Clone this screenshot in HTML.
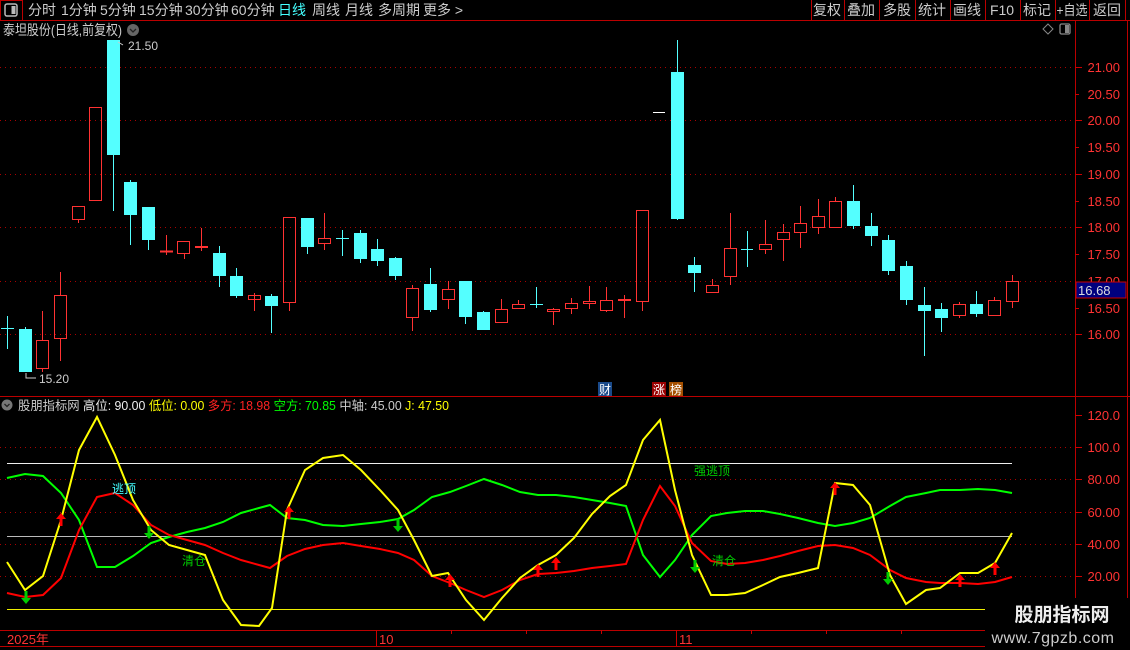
<!DOCTYPE html>
<html><head><meta charset="utf-8"><style>
html,body{margin:0;padding:0;background:#000;width:1130px;height:650px;overflow:hidden}
svg{display:block}
text{font-family:"Liberation Sans","Noto Sans CJK SC",sans-serif}
</style></head><body>
<svg width="1130" height="650" xmlns="http://www.w3.org/2000/svg">
<rect width="1130" height="650" fill="#000"/>
<!-- top bar -->
<line x1="0" y1="20.5" x2="1130" y2="20.5" stroke="#b00" />
<rect x="0.5" y="0.5" width="22" height="20" fill="none" stroke="#b00"/>
<rect x="5" y="4" width="12" height="12" rx="2" fill="none" stroke="#bbb" stroke-width="1.5"/>
<rect x="11.5" y="6" width="4" height="8" fill="#bbb"/>
<g font-size="14" fill="#ccc">
<text x="28" y="15">分时</text><text x="61" y="15">1分钟</text><text x="100" y="15">5分钟</text><text x="139" y="15">15分钟</text><text x="185" y="15">30分钟</text><text x="231" y="15">60分钟</text>
<text x="278" y="15" fill="#4ff">日线</text><text x="312" y="15">周线</text><text x="345" y="15">月线</text><text x="378" y="15">多周期</text><text x="423" y="15">更多 &gt;</text>
</g>
<g stroke="#b00"><line x1="811.5" y1="0" x2="811.5" y2="20"/><line x1="844.5" y1="0" x2="844.5" y2="20"/><line x1="879.5" y1="0" x2="879.5" y2="20"/><line x1="915.5" y1="0" x2="915.5" y2="20"/><line x1="950.5" y1="0" x2="950.5" y2="20"/><line x1="985.5" y1="0" x2="985.5" y2="20"/><line x1="1020.5" y1="0" x2="1020.5" y2="20"/><line x1="1055.5" y1="0" x2="1055.5" y2="20"/><line x1="1089.5" y1="0" x2="1089.5" y2="20"/><line x1="1125.5" y1="0" x2="1125.5" y2="20"/></g>
<g font-size="14" fill="#ccc" text-anchor="middle">
<text x="827" y="15">复权</text><text x="861" y="15">叠加</text><text x="897" y="15">多股</text><text x="932" y="15">统计</text><text x="967" y="15">画线</text><text x="1002" y="15">F10</text><text x="1037" y="15">标记</text><text x="1072" y="15" textLength="31" lengthAdjust="spacingAndGlyphs">+自选</text><text x="1107" y="15">返回</text>
</g>
<!-- title -->
<text x="3" y="35" font-size="14" fill="#ccc" textLength="119" lengthAdjust="spacingAndGlyphs">泰坦股份(日线,前复权)</text>
<circle cx="133" cy="30" r="6" fill="#666"/><path d="M130 29l3 3 3-3" stroke="#222" stroke-width="1.3" fill="none"/>
<path d="M1048 24l5 5-5 5-5-5z" fill="none" stroke="#888"/>
<rect x="1060" y="24" width="10" height="10" rx="1.5" fill="none" stroke="#888" stroke-width="1.3"/><rect x="1065" y="25" width="4" height="8" fill="#888"/>
<!-- axes -->
<line x1="1075.5" y1="21" x2="1075.5" y2="650" stroke="#b00"/>
<line x1="1127.5" y1="21" x2="1127.5" y2="650" stroke="#b00"/>
<line x1="0" y1="396.5" x2="1130" y2="396.5" stroke="#b00"/>
<line x1="0" y1="630.5" x2="1075" y2="630.5" stroke="#b00"/>
<line x1="0" y1="646.5" x2="1075" y2="646.5" stroke="#b00"/>
<g stroke="#a00" stroke-dasharray="1,4">
<line x1="0" y1="67.5" x2="1075" y2="67.5"/><line x1="0" y1="120.5" x2="1075" y2="120.5"/><line x1="0" y1="174.5" x2="1075" y2="174.5"/><line x1="0" y1="227.5" x2="1075" y2="227.5"/><line x1="0" y1="281.5" x2="1075" y2="281.5"/><line x1="0" y1="334.5" x2="1075" y2="334.5"/>
<line x1="0" y1="447.5" x2="1075" y2="447.5"/><line x1="0" y1="479.5" x2="1075" y2="479.5"/><line x1="0" y1="512.5" x2="1075" y2="512.5"/><line x1="0" y1="544.5" x2="1075" y2="544.5"/><line x1="0" y1="576.5" x2="1075" y2="576.5"/>
</g>
<g font-size="13" fill="#f33" text-anchor="end">
<text x="1120" y="72">21.00</text><text x="1120" y="99">20.50</text><text x="1120" y="125">20.00</text><text x="1120" y="152">19.50</text><text x="1120" y="179">19.00</text><text x="1120" y="206">18.50</text><text x="1120" y="232">18.00</text><text x="1120" y="259">17.50</text><text x="1120" y="286">17.00</text><text x="1120" y="313">16.50</text><text x="1120" y="339">16.00</text>
</g>
<g stroke="#c00"><line x1="1075" y1="67.5" x2="1082" y2="67.5"/><line x1="1075" y1="94.5" x2="1079" y2="94.5"/><line x1="1075" y1="120.5" x2="1082" y2="120.5"/><line x1="1075" y1="147.5" x2="1079" y2="147.5"/><line x1="1075" y1="174.5" x2="1082" y2="174.5"/><line x1="1075" y1="201.5" x2="1079" y2="201.5"/><line x1="1075" y1="227.5" x2="1082" y2="227.5"/><line x1="1075" y1="254.5" x2="1079" y2="254.5"/><line x1="1075" y1="308.5" x2="1079" y2="308.5"/><line x1="1075" y1="334.5" x2="1082" y2="334.5"/>
<line x1="1075" y1="415.5" x2="1082" y2="415.5"/><line x1="1075" y1="447.5" x2="1082" y2="447.5"/><line x1="1075" y1="479.5" x2="1082" y2="479.5"/><line x1="1075" y1="512.5" x2="1082" y2="512.5"/><line x1="1075" y1="544.5" x2="1082" y2="544.5"/><line x1="1075" y1="576.5" x2="1082" y2="576.5"/></g>
<rect x="1076" y="282" width="50" height="16" fill="#00007f" stroke="#c00"/>
<text x="1078" y="295" font-size="13" fill="#ddd">16.68</text>
<g font-size="13" fill="#f33" text-anchor="end">
<text x="1120" y="420">120.0</text><text x="1120" y="452">100.0</text><text x="1120" y="484">80.00</text><text x="1120" y="517">60.00</text><text x="1120" y="549">40.00</text><text x="1120" y="581">20.00</text>
</g>
<!-- candles -->
<g stroke-width="1">
<g stroke="#54ffff" fill="#54ffff">
<line x1="7.5" y1="316" x2="7.5" y2="349"/><line x1="1" y1="328.5" x2="14" y2="328.5"/>
<line x1="25.5" y1="327" x2="25.5" y2="372"/><rect x="19" y="329" width="13" height="43" stroke="none"/>
<line x1="113.5" y1="40" x2="113.5" y2="211"/><rect x="107" y="40" width="13" height="115" stroke="none"/>
<line x1="130.5" y1="180" x2="130.5" y2="245"/><rect x="124" y="182" width="13" height="33" stroke="none"/>
<line x1="148.5" y1="207" x2="148.5" y2="250"/><rect x="142" y="207" width="13" height="33" stroke="none"/>
<line x1="219.5" y1="246" x2="219.5" y2="287"/><rect x="213" y="253" width="13" height="23" stroke="none"/>
<line x1="236.5" y1="268" x2="236.5" y2="298"/><rect x="230" y="276" width="13" height="20" stroke="none"/>
<line x1="271.5" y1="294" x2="271.5" y2="333"/><rect x="265" y="296" width="13" height="10" stroke="none"/>
<line x1="307.5" y1="218" x2="307.5" y2="254"/><rect x="301" y="218" width="13" height="29" stroke="none"/>
<line x1="342.5" y1="230" x2="342.5" y2="256"/><line x1="336" y1="238.5" x2="349" y2="238.5"/>
<line x1="360.5" y1="230" x2="360.5" y2="263"/><rect x="354" y="233" width="13" height="26" stroke="none"/>
<line x1="377.5" y1="239" x2="377.5" y2="266"/><rect x="371" y="249" width="13" height="12" stroke="none"/>
<line x1="395.5" y1="257" x2="395.5" y2="280"/><rect x="389" y="258" width="13" height="18" stroke="none"/>
<line x1="430.5" y1="268" x2="430.5" y2="312"/><rect x="424" y="284" width="13" height="26" stroke="none"/>
<line x1="465.5" y1="281" x2="465.5" y2="324"/><rect x="459" y="281" width="13" height="36" stroke="none"/>
<line x1="483.5" y1="311" x2="483.5" y2="330"/><rect x="477" y="312" width="13" height="18" stroke="none"/>
<line x1="536.5" y1="287" x2="536.5" y2="308"/><line x1="530" y1="304.5" x2="543" y2="304.5"/>
<line x1="677.5" y1="40" x2="677.5" y2="220"/><rect x="671" y="72" width="13" height="147" stroke="none"/>
<line x1="694.5" y1="257" x2="694.5" y2="292"/><rect x="688" y="265" width="13" height="8" stroke="none"/>
<line x1="747.5" y1="231" x2="747.5" y2="267"/><line x1="741" y1="249.5" x2="753" y2="249.5"/>
<line x1="853.5" y1="185" x2="853.5" y2="229"/><rect x="847" y="201" width="13" height="25" stroke="none"/>
<line x1="871.5" y1="213" x2="871.5" y2="246"/><rect x="865" y="226" width="13" height="10" stroke="none"/>
<line x1="888.5" y1="235" x2="888.5" y2="275"/><rect x="882" y="240" width="13" height="31" stroke="none"/>
<line x1="906.5" y1="261" x2="906.5" y2="305"/><rect x="900" y="266" width="13" height="34" stroke="none"/>
<line x1="924.5" y1="287" x2="924.5" y2="356"/><rect x="918" y="305" width="13" height="6" stroke="none"/>
<line x1="941.5" y1="303" x2="941.5" y2="332"/><rect x="935" y="309" width="13" height="9" stroke="none"/>
<line x1="976.5" y1="291" x2="976.5" y2="317"/><rect x="970" y="304" width="13" height="10" stroke="none"/>
</g>
<g stroke="#ff3232" fill="none">
<line x1="42.5" y1="311" x2="42.5" y2="340"/><line x1="42.5" y1="369" x2="42.5" y2="372"/><rect x="36.5" y="340.5" width="12" height="28"/>
<line x1="60.5" y1="272" x2="60.5" y2="295"/><line x1="60.5" y1="339" x2="60.5" y2="361"/><rect x="54.5" y="295.5" width="12" height="43"/>
<line x1="78.5" y1="220" x2="78.5" y2="223"/><rect x="72.5" y="206.5" width="12" height="13"/>
<rect x="89.5" y="107.5" width="12" height="93"/>
<line x1="166.5" y1="235" x2="166.5" y2="255"/><line x1="160" y1="251.5" x2="173" y2="251.5" stroke-width="2"/>
<line x1="184.5" y1="254" x2="184.5" y2="259"/><rect x="177.5" y="241.5" width="12" height="12"/>
<line x1="201.5" y1="228" x2="201.5" y2="251"/><line x1="195" y1="247" x2="208" y2="247" stroke-width="2"/>
<line x1="254.5" y1="293" x2="254.5" y2="311"/><rect x="248.5" y="295.5" width="12" height="4"/>
<line x1="289.5" y1="303" x2="289.5" y2="311"/><rect x="283.5" y="217.5" width="12" height="85"/>
<line x1="324.5" y1="213" x2="324.5" y2="250"/><rect x="318.5" y="238.5" width="12" height="5" fill="#000"/>
<line x1="412.5" y1="285" x2="412.5" y2="288"/><line x1="412.5" y1="318" x2="412.5" y2="331"/><rect x="406.5" y="288.5" width="12" height="29"/>
<line x1="448.5" y1="281" x2="448.5" y2="309"/><rect x="442.5" y="289.5" width="12" height="10" fill="#000"/>
<line x1="501.5" y1="299" x2="501.5" y2="323"/><rect x="495.5" y="309.5" width="12" height="13" fill="#000"/>
<line x1="518.5" y1="300" x2="518.5" y2="304"/><rect x="512.5" y="304.5" width="12" height="4"/>
<line x1="553.5" y1="308" x2="553.5" y2="325"/><rect x="547.5" y="309.5" width="12" height="2" fill="#000"/>
<line x1="571.5" y1="298" x2="571.5" y2="314"/><rect x="565.5" y="303.5" width="12" height="5" fill="#000"/>
<line x1="589.5" y1="286" x2="589.5" y2="309"/><rect x="583.5" y="301.5" width="12" height="2" fill="#000"/>
<line x1="606.5" y1="287" x2="606.5" y2="312"/><rect x="600.5" y="300.5" width="12" height="10" fill="#000"/>
<line x1="624.5" y1="295" x2="624.5" y2="318"/><line x1="618" y1="300" x2="631" y2="300" stroke-width="2"/>
<line x1="642.5" y1="302" x2="642.5" y2="311"/><rect x="636.5" y="210.5" width="12" height="91"/>
<line x1="712.5" y1="279" x2="712.5" y2="285"/><rect x="706.5" y="285.5" width="12" height="7"/>
<line x1="730.5" y1="213" x2="730.5" y2="285"/><rect x="724.5" y="248.5" width="12" height="28" fill="#000"/>
<line x1="765.5" y1="220" x2="765.5" y2="254"/><rect x="759.5" y="244.5" width="12" height="5" fill="#000"/>
<line x1="783.5" y1="224" x2="783.5" y2="261"/><rect x="777.5" y="232.5" width="12" height="7" fill="#000"/>
<line x1="800.5" y1="206" x2="800.5" y2="248"/><rect x="794.5" y="223.5" width="12" height="9" fill="#000"/>
<line x1="818.5" y1="199" x2="818.5" y2="234"/><rect x="812.5" y="216.5" width="12" height="11" fill="#000"/>
<line x1="835.5" y1="197" x2="835.5" y2="201"/><rect x="829.5" y="201.5" width="12" height="26"/>
<line x1="959.5" y1="302" x2="959.5" y2="318"/><rect x="953.5" y="304.5" width="12" height="11" fill="#000"/>
<line x1="994.5" y1="297" x2="994.5" y2="300"/><rect x="988.5" y="300.5" width="12" height="15"/>
<line x1="1012.5" y1="275" x2="1012.5" y2="308"/><rect x="1006.5" y="281.5" width="12" height="20" fill="#000"/>
</g>
</g>
<line x1="653" y1="112.5" x2="665" y2="112.5" stroke="#fff"/>
<text x="128" y="50" font-size="12" fill="#ccc">21.50</text><path d="M118 42l5 3" stroke="#ccc"/>
<text x="39" y="383" font-size="12" fill="#ccc">15.20</text><path d="M26 373v5h10" stroke="#ccc" fill="none"/>
<rect x="598" y="382" width="14" height="14" fill="#1a4a8a"/><text x="599" y="394" font-size="12" fill="#fff">财</text>
<rect x="652" y="382" width="14" height="14" fill="#900"/><text x="653" y="394" font-size="12" fill="#fff">涨</text>
<rect x="669" y="382" width="14" height="14" fill="#a55000"/><text x="670" y="394" font-size="12" fill="#fff">榜</text>
<!-- indicator header -->
<circle cx="7" cy="405" r="5.5" fill="#777"/><path d="M4.5 404l2.5 2.5 2.5-2.5" stroke="#222" stroke-width="1.3" fill="none"/>
<text x="18" y="410" font-size="12.5" fill="#ccc" textLength="431" lengthAdjust="spacingAndGlyphs">股朋指标网 <tspan fill="#eee">高位: 90.00</tspan> <tspan fill="#ff0">低位: 0.00</tspan> <tspan fill="#f22">多方: 18.98</tspan> <tspan fill="#0f0">空方: 70.85</tspan> <tspan fill="#ccc">中轴: 45.00</tspan> <tspan fill="#ff0">J: 47.50</tspan></text>
<!-- horizontal lines -->
<line x1="7" y1="463.5" x2="1012" y2="463.5" stroke="#eee"/>
<line x1="7" y1="536.5" x2="1012" y2="536.5" stroke="#bbb"/>
<line x1="7" y1="609.5" x2="985" y2="609.5" stroke="#ee0"/>
<!-- curves -->
<polyline fill="none" stroke="#0f0" stroke-width="2" points="7,478 25,474 43,476 61,493 79,520 97,567 115,567 133,556 151,543 169,537 187,532 205,528 223,522 241,513 259,508 270,505 287,518 305,520 323,525 343,526 361,524 380,522 398,519 414,510 432,497 450,492 466,486 484,479 502,485 520,492 538,495 556,495 574,497 592,500 610,503 626,506 643,555 660,577 675,560 692,535 711,516 727,513 745,511 763,511 780,514 798,518 818,523 835,526 853,523 870,518 890,506 906,497 926,493 940,490 960,490 978,489 995,490 1012,493"/>
<polyline fill="none" stroke="#f00" stroke-width="2" points="7,593 25,597 43,595 61,578 79,530 97,497 115,493 133,505 151,525 169,535 187,540 205,545 223,553 241,560 259,565 270,568 287,556 305,549 323,545 343,543 361,546 380,549 398,553 414,560 432,576 450,583 466,590 484,597 502,590 520,580 538,574 556,573 574,571 592,568 610,566 626,564 643,520 660,486 675,506 692,543 711,561 727,564 745,563 763,560 780,556 798,551 818,546 835,545 853,548 870,555 890,570 906,578 926,582 940,583 960,583 978,584 995,582 1012,577"/>
<polyline fill="none" stroke="#ff0" stroke-width="2" points="7,562 25,590 43,576 61,520 79,450 97,417 115,455 133,500 151,530 169,545 187,550 205,555 223,600 241,625 259,626 272,608 287,510 305,470 323,458 343,455 361,470 380,490 398,510 414,540 432,576 448,573 466,600 484,620 502,598 520,578 538,565 556,555 574,538 592,514 610,496 626,485 643,440 660,420 675,490 692,555 711,595 727,595 745,593 763,585 780,577 798,573 818,568 835,483 853,485 870,505 890,575 906,604 926,590 940,588 960,573 978,573 995,563 1012,533"/>
<!-- arrows -->
<g fill="#f00">
<path d="M61 513l-5 6h3.5v7h3v-7h3.5z"/><path d="M289 506l-5 6h3.5v7h3v-7h3.5z"/><path d="M450 574l-5 6h3.5v7h3v-7h3.5z"/><path d="M538 564l-5 6h3.5v7h3v-7h3.5z"/><path d="M556 557l-5 6h3.5v7h3v-7h3.5z"/><path d="M835 482l-5 6h3.5v7h3v-7h3.5z"/><path d="M960 574l-5 6h3.5v7h3v-7h3.5z"/><path d="M995 562l-5 6h3.5v7h3v-7h3.5z"/>
</g>
<g fill="#0c0">
<path d="M26 604l-5-6h3.5v-7h3v7h3.5z"/><path d="M149 539l-5-6h3.5v-7h3v7h3.5z"/><path d="M398 532l-5-6h3.5v-7h3v7h3.5z"/><path d="M695 573l-5-6h3.5v-7h3v7h3.5z"/><path d="M888 585l-5-6h3.5v-7h3v7h3.5z"/>
</g>
<text x="112" y="493" font-size="12" fill="#4ff">逃顶</text>
<text x="182" y="565" font-size="12" fill="#0c0">清仓</text>
<text x="694" y="475" font-size="12" fill="#0c0">强逃顶</text>
<text x="712" y="565" font-size="12" fill="#0c0">清仓</text>
<!-- bottom axis -->
<g stroke="#c00"><line x1="376.5" y1="630" x2="376.5" y2="646"/><line x1="676.5" y1="630" x2="676.5" y2="646"/><line x1="451.5" y1="630" x2="451.5" y2="634"/><line x1="526.5" y1="630" x2="526.5" y2="634"/><line x1="601.5" y1="630" x2="601.5" y2="634"/><line x1="751.5" y1="630" x2="751.5" y2="634"/><line x1="826.5" y1="630" x2="826.5" y2="634"/><line x1="901.5" y1="630" x2="901.5" y2="634"/></g>
<text x="7" y="644" font-size="13" fill="#f33">2025年</text>
<text x="379" y="644" font-size="13" fill="#f33">10</text>
<text x="679" y="644" font-size="13" fill="#f33">11</text>
<!-- watermark -->
<rect x="985" y="598" width="145" height="52" fill="#000"/>
<text x="1062" y="621" font-size="19" font-weight="bold" fill="#eee" text-anchor="middle">股朋指标网</text>
<text x="1053" y="643" font-size="16" fill="#ccc" text-anchor="middle" letter-spacing="0.5">www.7gpzb.com</text>
</svg>
</body></html>
